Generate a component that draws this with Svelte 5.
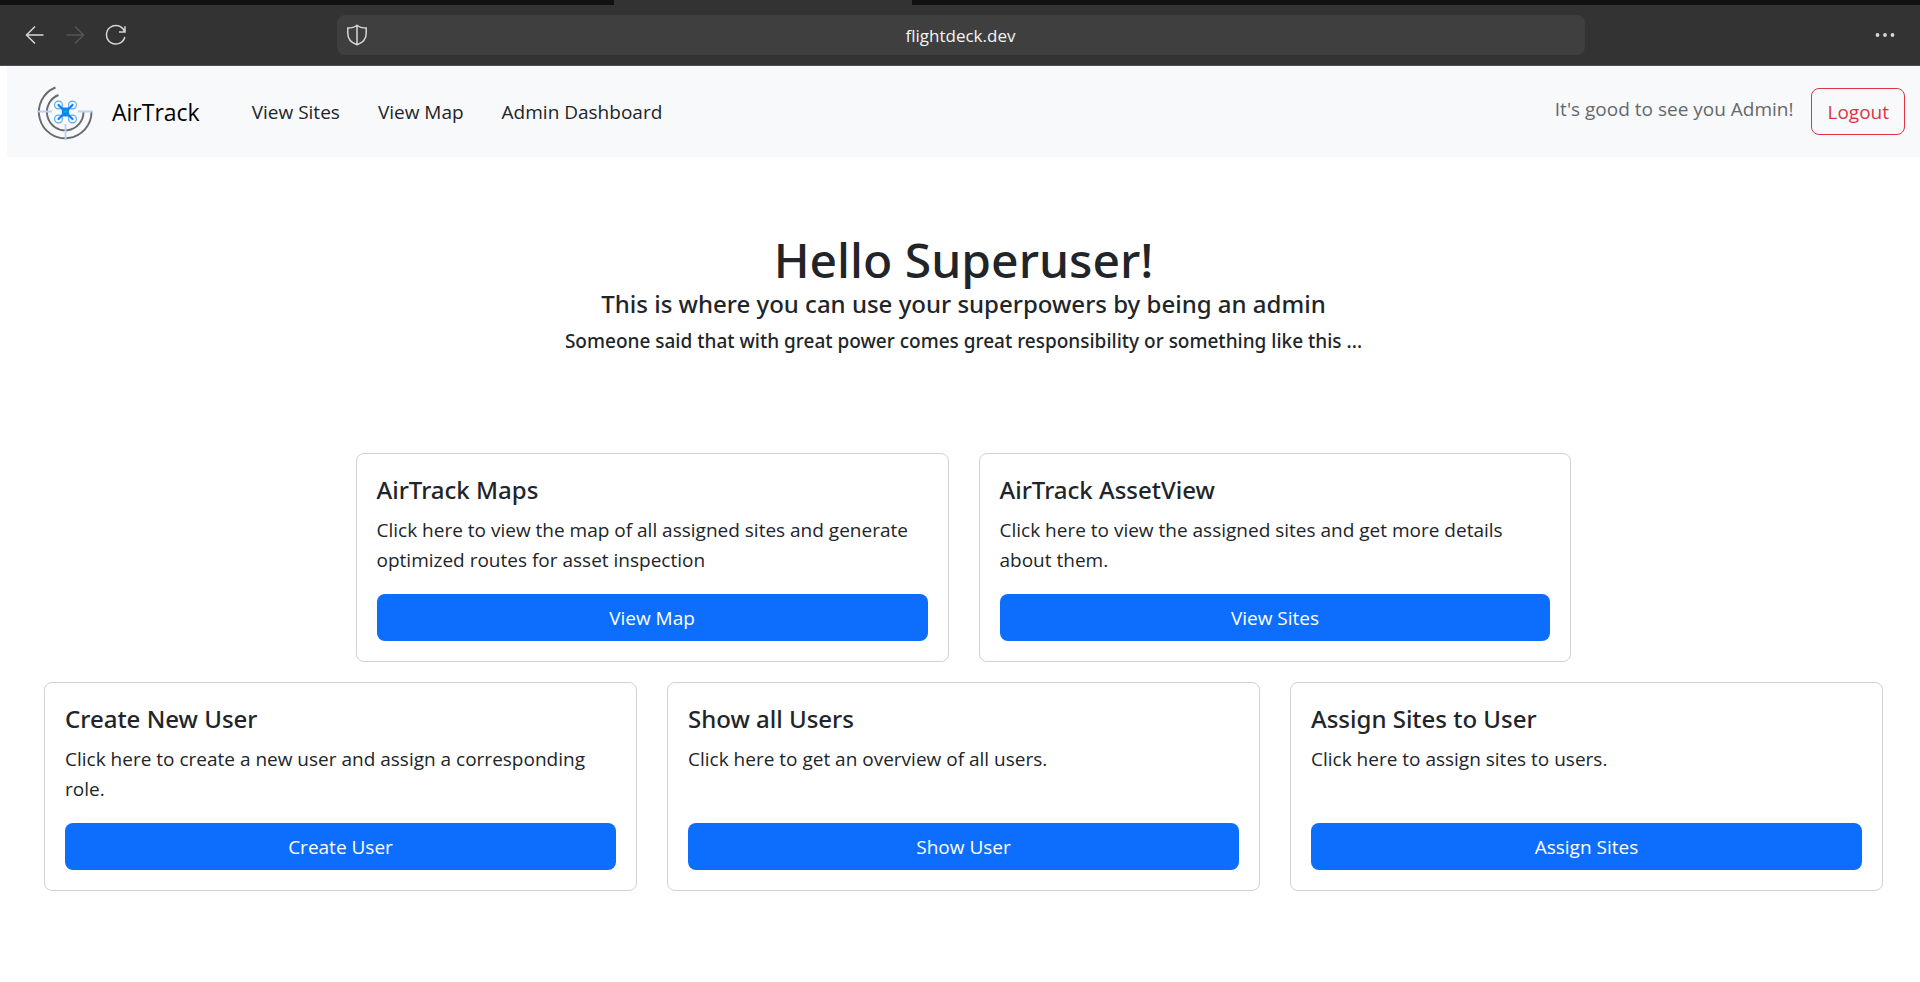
<script>
  const links = ['View Sites', 'View Map', 'Admin Dashboard'];
  const cards = [
    { title: 'AirTrack Maps', text: 'Click here to view the map of all assigned sites and generate optimized routes for asset inspection', action: 'View Map' },
    { title: 'AirTrack AssetView', text: 'Click here to view the assigned sites and get more details about them.', action: 'View Sites' },
    { title: 'Create New User', text: 'Click here to create a new user and assign a corresponding role.', action: 'Create User' },
    { title: 'Show all Users', text: 'Click here to get an overview of all users.', action: 'Show User' },
    { title: 'Assign Sites to User', text: 'Click here to assign sites to users.', action: 'Assign Sites' }
  ];
  const rows = [cards.slice(0, 2), cards.slice(2)];
</script>

<div class="browser">
  <div class="tabs"><span class="tab"></span></div>
  <div class="toolbar">
    <div class="controls">
      <button class="icon" aria-label="Back">
        <svg width="20" height="20" viewBox="0 0 20 20"><path d="M18.500 10H2M10 1.500L1.500 10l8.500 8.500" /></svg>
      </button>
      <button class="icon" aria-label="Forward" disabled>
        <svg width="20" height="20" viewBox="0 0 20 20"><path d="M1.500 10H18M10 1.500L18.500 10 10 18.500" /></svg>
      </button>
      <button class="icon" aria-label="Reload">
        <svg width="22" height="22" viewBox="0 0 22 22"><path d="M19.500 7.500A9.300 9.300 0 1 0 19.800 13M20 2.200v5.800h-6" /></svg>
      </button>
    </div>
    <div class="address">
      <svg class="shield" width="22" height="22" viewBox="0 0 22 22"><path d="M11 1.200C8.500 3.300 5.500 4 1.800 4v5.500C1.800 15 5 18.700 11 20.800c6-2.100 9.200-5.800 9.200-11.300V4C16.500 4 13.500 3.300 11 1.200zM11 1.200v19.600" /></svg>
      <span>flightdeck.dev</span>
    </div>
    <div class="menu">
      <button class="icon" aria-label="More">
        <svg width="22" height="6" viewBox="0 0 22 6"><g class="dots"><circle cx="3.500" cy="3" r="1.900" /><circle cx="11" cy="3" r="1.900" /><circle cx="18.500" cy="3" r="1.900" /></g></svg>
      </button>
    </div>
  </div>
</div>

<div class="page">
  <nav>
    <a class="brand" href="#home">
      <svg width="60" height="60" viewBox="0 0 60 60" aria-hidden="true">
        <g fill="none" stroke="#676b70" stroke-width="1.900">
          <path d="M20.500 5.500A26.300 26.300 0 1 0 56.500 30" />
          <path d="M23.500 13A18.300 18.300 0 1 0 48.500 30" />
        </g>
        <path d="M2 29.500h15M43 29.500h15M30.500 42v15" stroke="#bccff5" stroke-width="1.800" />
        <g fill="none" stroke="#58aaf8" stroke-width="1.200">
          <circle cx="23.500" cy="23" r="3.900" /><circle cx="37.500" cy="23" r="3.900" />
          <circle cx="23.500" cy="37" r="3.900" /><circle cx="37.500" cy="37" r="3.900" />
        </g>
        <path d="M23.500 23l14 14M37.500 23l-14 14" stroke="#0d84f8" stroke-width="2.200" stroke-linecap="round" />
        <path d="M26.500 25.500h8l-.500 4.500.500 4.500h-8l.500-4.500z" fill="#0d84f8" />
        <path d="M28.500 28.500h4v2h-4z" fill="#18aab0" />
      </svg>
      <span>AirTrack</span>
    </a>
    <div class="links">
      {#each links as link}<a href="#nav">{link}</a>{/each}
    </div>
    <span class="greeting">It's good to see you Admin!</span>
    <button class="logout">Logout</button>
  </nav>

  <header>
    <h1>Hello Superuser!</h1>
    <h2>This is where you can use your superpowers by being an admin</h2>
    <h3>Someone said that with great power comes great responsibility or something like this ...</h3>
  </header>

  <main>
    {#each rows as row}
      <div class="row">
        {#each row as card}
          <section class="card">
            <h4>{card.title}</h4>
            <p>{card.text}</p>
            <button>{card.action}</button>
          </section>
        {/each}
      </div>
    {/each}
  </main>
</div>

<style>
  :global(body) {
    background: #fff;
    color: #212529;
    font: 19px/30px "Open Sans", "Noto Sans", sans-serif;
  }
  * { box-sizing: border-box; }
  h1, h2, h3, h4, p { margin: 0; }
  h1, h2, h3, h4 { font-family: "Noto Sans", "Open Sans", sans-serif; font-weight: 500; }
  a { color: inherit; text-decoration: none; }
  button { font: inherit; cursor: pointer; }

  .browser { background: #333; border-bottom: 1px solid #505052; }
  .tabs { height: 5px; background: #111; }
  .tab { display: block; height: 5px; width: 298px; margin-left: 32%; background: #333; }
  .toolbar { display: flex; align-items: center; height: 60px; }
  .controls, .menu { flex: 1; display: flex; align-items: center; }
  .controls { gap: 20px; padding-left: 25px; }
  .menu { justify-content: flex-end; padding-right: 24px; }
  .icon { display: flex; padding: 0; border: 0; background: none; }
  .icon svg, .shield { fill: none; stroke: #d6d6d6; stroke-width: 1.5; }
  .icon:disabled svg { stroke: #555; }
  .icon .dots { fill: #d6d6d6; stroke: none; }
  .address {
    display: flex; align-items: center; justify-content: center; position: relative;
    width: 65%; height: 40px; padding-top: 2px; border-radius: 8px; background: #3f3f3f;
    color: #f4f4f4; font-size: 17px;
  }
  .shield { position: absolute; left: 9px; top: 9px; }

  .page { margin-left: 7px; }
  nav { display: flex; align-items: center; height: 91px; padding: 0 15px 0 28px; background: #f8f9fb; }
  .brand { display: flex; align-items: center; gap: 17px; color: #000; font-size: 23px; }
  .links { display: flex; flex: 1; gap: 38px; padding-left: 52px; }
  .greeting { color: #65686b; padding-bottom: 6px; }
  .logout {
    height: 47px; margin-left: 18px; padding: 0 15px; border: 1px solid #dc3545;
    border-radius: 8px; background: none; color: #dc3545;
  }

  header { padding: 72px 20px 100px; text-align: center; }
  h1 { font-size: 48px; line-height: 62px; }
  h2 { font-size: 24px; line-height: 26px; }
  h3 { margin-top: 12px; font-size: 19px; line-height: 24px; }

  main { display: grid; gap: 20px; padding: 0 37px 40px; }
  .row { display: flex; justify-content: center; gap: 30px; }
  .card {
    display: flex; flex-direction: column; width: calc((100% - 60px) / 3);
    padding: 21px 20px 20px; border: 1px solid #d0d1d2; border-radius: 8px;
  }
  h4 { margin-bottom: 10px; font-size: 24px; line-height: 30px; }
  p { flex: 1; margin-bottom: 19px; }
  .card button { height: 47px; border: 0; border-radius: 8px; background: #0d6efd; color: #fff; }
</style>
